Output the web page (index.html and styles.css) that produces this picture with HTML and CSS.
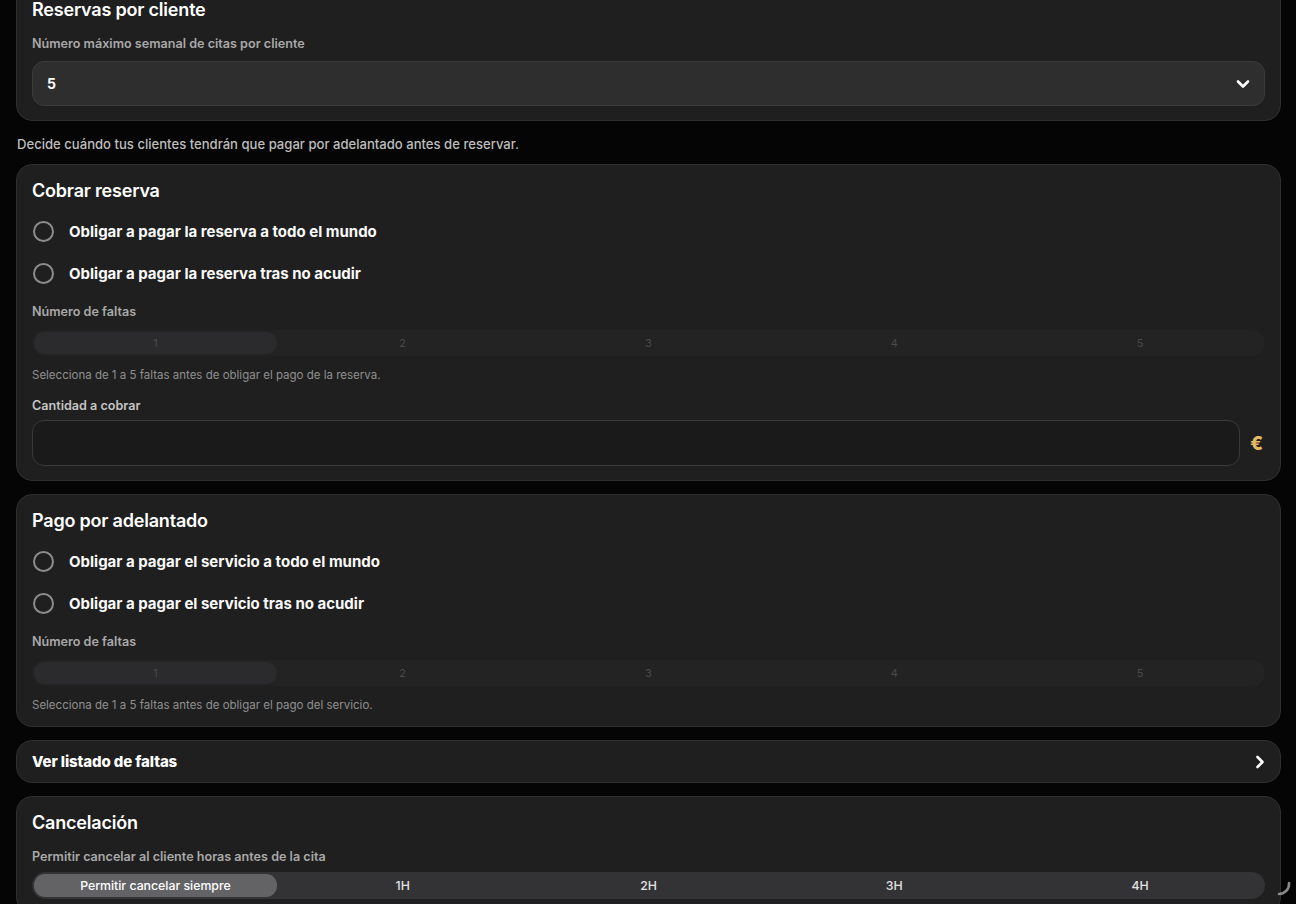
FILE: index.html
```html
<!DOCTYPE html>
<html lang="es">
<head>
  <meta charset="UTF-8" />
  <meta name="viewport" content="width=device-width, initial-scale=1.0"/>
  <title>Ajustes de reservas</title>
  <link rel="stylesheet" href="styles.css">
</head>
<body>

<main class="settings">

  <section class="card card-top">
    <h2>Reservas por cliente</h2>
    <div class="field-label">Número máximo semanal de citas por cliente</div>
    <div class="select">
      <span>5</span>
      <svg width="14" height="10" viewBox="0 0 14 10"><path d="M2 2.5 L7 7.5 L12 2.5" fill="none" stroke="#fff" stroke-width="2.6" stroke-linecap="round" stroke-linejoin="round"/></svg>
    </div>
  </section>

  <p class="intro">Decide cuándo tus clientes tendrán que pagar por adelantado antes de reservar.</p>

  <section class="card">
    <h2>Cobrar reserva</h2>
    <label class="radio"><span class="circle"></span>Obligar a pagar la reserva a todo el mundo</label>
    <label class="radio"><span class="circle"></span>Obligar a pagar la reserva tras no acudir</label>
    <div class="field-label">Número de faltas</div>
    <div class="segmented disabled">
      <div class="seg active">1</div>
      <div class="seg">2</div>
      <div class="seg">3</div>
      <div class="seg">4</div>
      <div class="seg">5</div>
    </div>
    <div class="helper">Selecciona de 1 a 5 faltas antes de obligar el pago de la reserva.</div>
    <div class="field-label amount-label">Cantidad a cobrar</div>
    <div class="amount-row">
      <input type="text" class="amount" />
      <span class="euro">€</span>
    </div>
  </section>

  <section class="card">
    <h2>Pago por adelantado</h2>
    <label class="radio"><span class="circle"></span>Obligar a pagar el servicio a todo el mundo</label>
    <label class="radio"><span class="circle"></span>Obligar a pagar el servicio tras no acudir</label>
    <div class="field-label">Número de faltas</div>
    <div class="segmented disabled">
      <div class="seg active">1</div>
      <div class="seg">2</div>
      <div class="seg">3</div>
      <div class="seg">4</div>
      <div class="seg">5</div>
    </div>
    <div class="helper">Selecciona de 1 a 5 faltas antes de obligar el pago del servicio.</div>
  </section>

  <a class="card link-row" href="#faltas">
    <span>Ver listado de faltas</span>
    <svg width="10" height="14" viewBox="0 0 10 14"><path d="M2.5 2 L7.5 7 L2.5 12" fill="none" stroke="#fff" stroke-width="2.6" stroke-linecap="round" stroke-linejoin="round"/></svg>
  </a>

  <section class="card card-cancel">
    <h2>Cancelación</h2>
    <div class="field-label">Permitir cancelar al cliente horas antes de la cita</div>
    <div class="segmented cancel">
      <div class="seg active">Permitir cancelar siempre</div>
      <div class="seg">1H</div>
      <div class="seg">2H</div>
      <div class="seg">3H</div>
      <div class="seg">4H</div>
    </div>
  </section>

</main>

<!-- window resize grip -->
<svg class="grip" width="18" height="18" viewBox="0 0 18 18"><path d="M15 3 A10 10 0 0 1 5 14" fill="none" stroke="#8a8a8a" stroke-width="2.6" stroke-linecap="round"/></svg>

</body>
</html>
```

FILE: styles.css
```css
html, body {
  margin: 0;
  padding: 0;
  background: #050505;
  color: #fff;
  font-family: Inter, 'Noto Sans', sans-serif;
  overflow: hidden;
  height: 904px;
}
.settings {
  padding: 0 15px 0 16px;
  margin-top: -17px;
}
.card {
  display: block;
  background: #1f1f1f;
  border: 1px solid #2f2f2f;
  border-radius: 16px;
  padding: 14px 15px 14px 15px;
  margin-bottom: 13px;
}
.card h2 {
  margin: 0;
  font-size: 18px;
  line-height: 24px;
  font-weight: 600;
  letter-spacing: -0.2px;
}
.field-label {
  font-size: 12.6px;
  line-height: 16px;
  font-weight: 600;
  color: #a9a9a9;
  margin-top: 10px;
}
.card-top .field-label {
  margin-top: 14px;
}
.select {
  margin-top: 9px;
  height: 43px;
  background: #2e2e2e;
  border: 1px solid #3b3b3b;
  border-radius: 12px;
  display: flex;
  align-items: center;
  justify-content: space-between;
  padding: 0 14px;
  font-size: 14px;
  font-weight: 700;
}
.intro {
  margin: -12px 0 0 1px;
  padding: 14px 0 12px;
  font-size: 13.1px;
  line-height: 16px;
  font-weight: 500;
  color: #bdbdbd;
}
.radio {
  display: flex;
  align-items: center;
  height: 42px;
  font-size: 15px;
  font-weight: 700;
  color: #fafafa;
}
.card h2 + .radio {
  margin-top: 7px;
}
.circle {
  width: 17px;
  height: 17px;
  border: 2.5px solid #8c8c8c;
  border-radius: 50%;
  margin: 0 15px 0 1px;
}
.segmented {
  margin-top: 10px;
  display: grid;
  grid-template-columns: repeat(5, 1fr);
  padding: 2px;
  border-radius: 14px;
  background: #232323;
}
.seg {
  height: 22px;
  line-height: 22px;
  text-align: center;
  font-size: 11px;
  color: #4a4a4a;
  border-radius: 11px;
}
.segmented.disabled .seg.active {
  background: #2b2b2d;
  margin-right: 3px;
}
.helper {
  margin-top: 12px;
  font-size: 11.5px;
  line-height: 14px;
  color: #8f8f8f;
}
.amount-label {
  margin-top: 16px;
  color: #c4c4c4;
}
.amount-row {
  margin-top: 6px;
  display: flex;
  align-items: center;
  gap: 10px;
}
.amount {
  flex: 1;
  box-sizing: border-box;
  height: 46px;
  background: #1a1a1a;
  border: 1px solid #3a3a3a;
  border-radius: 12px;
  outline: none;
  color: #fff;
}
.euro {
  width: 15px;
  font-size: 19px;
  font-weight: 800;
  color: #e2b865;
}
.link-row {
  height: 41px;
  padding: 0 15px;
  display: flex;
  align-items: center;
  justify-content: space-between;
  text-decoration: none;
  color: #fff;
  font-size: 15px;
  font-weight: 800;
  letter-spacing: -0.1px;
}
.card-cancel .field-label {
  margin-top: 14px;
}
.segmented.cancel {
  margin-top: 7px;
  background: #333335;
}
.segmented.cancel .seg {
  height: 23px;
  line-height: 23px;
  font-size: 12.3px;
  font-weight: 500;
  color: #e2e2e2;
}
.segmented.cancel .seg.active {
  background: #636366;
  color: #fff;
  margin-right: 3px;
}
.grip {
  position: fixed;
  right: 4px;
  bottom: 6px;
}
```
